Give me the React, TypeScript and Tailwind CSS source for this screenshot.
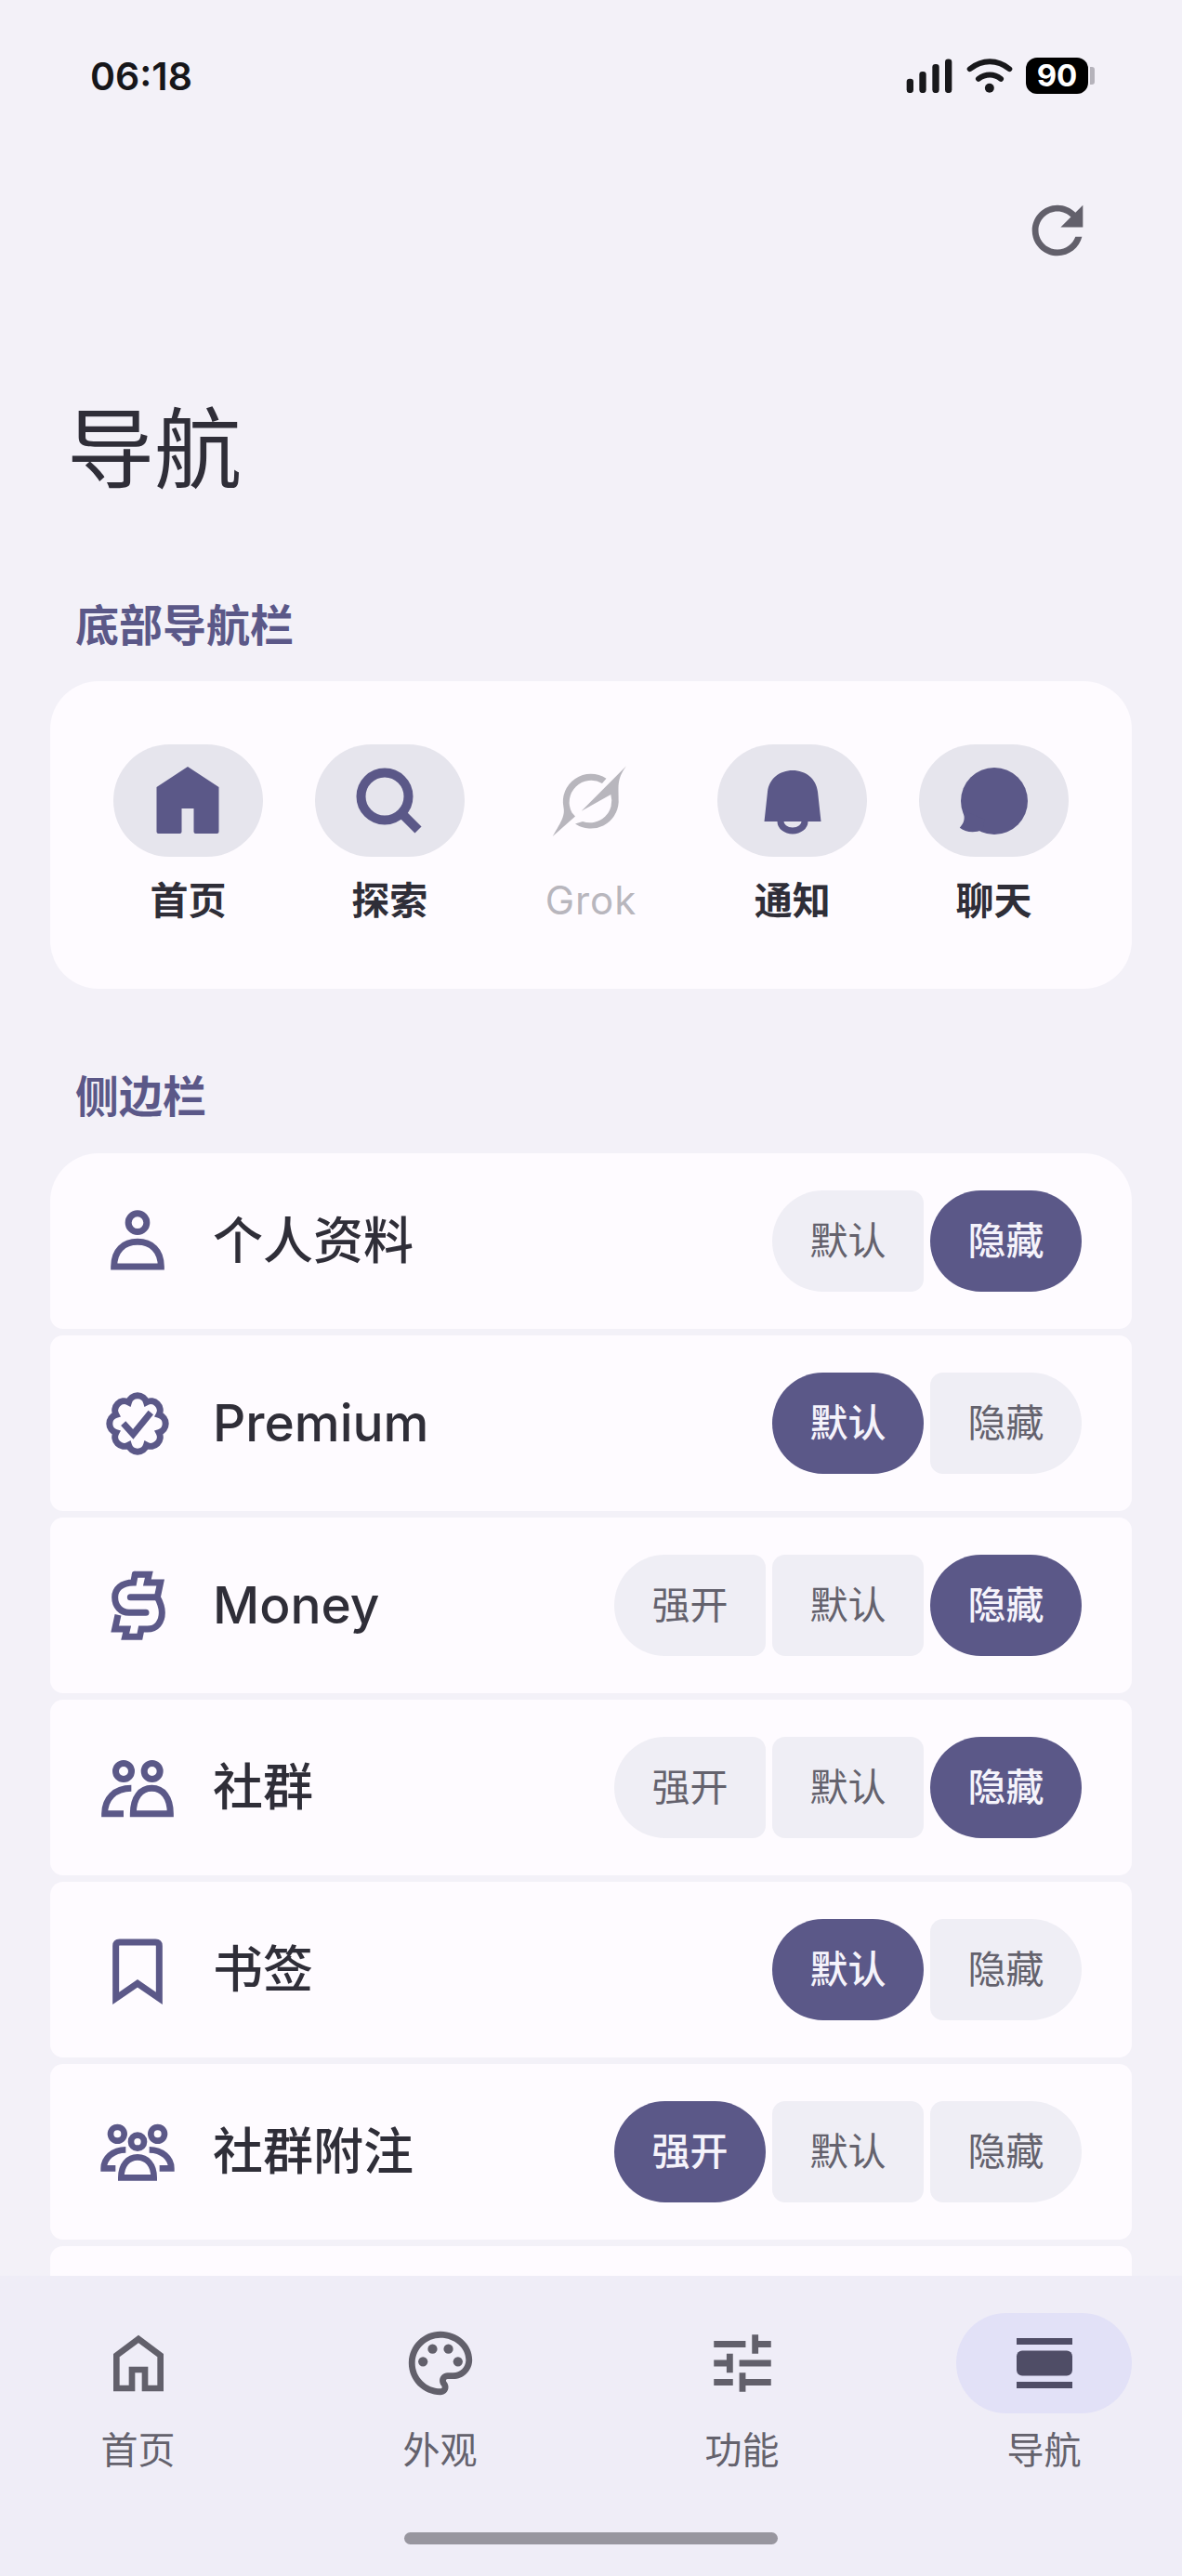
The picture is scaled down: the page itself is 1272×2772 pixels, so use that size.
import type { ReactNode } from "react";

type Choice = "强开" | "默认" | "隐藏";

type SidebarRow = {
  label: string;
  icon: ReactNode;
  options: Choice[];
  selected: Choice;
};

const PRIMARY = "#5b5888";

// eight lobes, valleys sit between the compass points
const badgePath = (() => {
  const pts = Array.from({ length: 8 }, (_, i) => {
    const a = ((22.5 + 45 * i) * Math.PI) / 180;
    return [40 + 25 * Math.sin(a), 40 - 25 * Math.cos(a)];
  });
  let d = `M${pts[7][0].toFixed(2)} ${pts[7][1].toFixed(2)}`;
  pts.forEach(([x, y]) => {
    d += ` A10 10 0 0 1 ${x.toFixed(2)} ${y.toFixed(2)}`;
  });
  return d + " Z";
})();

function OutlineIcon({ viewBox, width, children }: { viewBox: string; width: number; children: ReactNode }) {
  return (
    <svg viewBox={viewBox} className="h-[80px] w-[80px]" fill="none" stroke={PRIMARY} strokeWidth={width}>
      {children}
    </svg>
  );
}

const PersonIcon = (
  <OutlineIcon viewBox="55 46 240 240" width={21}>
    <circle cx="175" cy="105" r="29.5" />
    <path d="M99 247C99 195 130 167 175 167C220 167 251 195 251 247Z" />
  </OutlineIcon>
);

const BadgeIcon = (
  <OutlineIcon viewBox="0 0 80 80" width={7}>
    <path d={badgePath} />
    <path d="M24.7 39.7L35.3 51.3L54.3 28" />
  </OutlineIcon>
);

const MoneyIcon = (
  <OutlineIcon viewBox="53 23 240 240" width={21}>
    <path d="M165 42H210L204 68H247L237 115H150" strokeLinecap="round" />
    <path d="M165 42L160 68C120 68 100 90 100 115C100 145 120 165 145 165H200" strokeLinecap="round" />
    <path d="M237 115C245 130 252 145 252 165C252 195 235 218 205 218H185L180 243H133L139 218H100L110 172" />
  </OutlineIcon>
);

const GroupIcon = (
  <OutlineIcon viewBox="55 609 240 240" width={21}>
    <circle cx="130" cy="675" r="25.5" />
    <circle cx="222" cy="675" r="25.5" />
    <path d="M130 812H69C69 765 100 730 155 730" />
    <path d="M161 812C161 760 185 730 221 730C257 730 281 760 281 812Z" />
  </OutlineIcon>
);

const BookmarkIcon = (
  <OutlineIcon viewBox="55 57 240 240" width={21}>
    <path d="M105 268V99Q105 87 117 87H233Q245 87 245 99V268L175 220Z" />
  </OutlineIcon>
);

const CommunityIcon = (
  <OutlineIcon viewBox="55 645 240 240" width={20}>
    <circle cx="110" cy="706" r="22" />
    <circle cx="240" cy="706" r="22" />
    <circle cx="175" cy="731" r="21" />
    <path d="M122 847C122 805 145 781 175 781C205 781 228 805 228 847Z" />
    <path d="M137 757C95 757 66 785 66 817H104" />
    <path d="M213 757C255 757 284 785 284 817H246" />
  </OutlineIcon>
);

const rows: SidebarRow[] = [
  { label: "个人资料", icon: PersonIcon, options: ["默认", "隐藏"], selected: "隐藏" },
  { label: "Premium", icon: BadgeIcon, options: ["默认", "隐藏"], selected: "默认" },
  { label: "Money", icon: MoneyIcon, options: ["强开", "默认", "隐藏"], selected: "隐藏" },
  { label: "社群", icon: GroupIcon, options: ["强开", "默认", "隐藏"], selected: "隐藏" },
  { label: "书签", icon: BookmarkIcon, options: ["默认", "隐藏"], selected: "默认" },
  { label: "社群附注", icon: CommunityIcon, options: ["强开", "默认", "隐藏"], selected: "强开" },
];

function StatusBar() {
  return (
    <div className="flex h-[39px] items-center justify-between pl-[97px] pr-[94px]">
      <span className="mt-[2px] text-[41px] leading-none font-semibold text-[#16161a]">06:18</span>
      <div className="flex items-center">
        <svg viewBox="105 70 150 112" className="h-[37.5px] w-[50px]" fill="#18181b">
          <rect x="107" y="135" width="22" height="46" rx="10" />
          <rect x="148" y="112" width="22" height="69" rx="10" />
          <rect x="190" y="88" width="22" height="93" rx="10" />
          <rect x="231" y="71" width="22" height="110" rx="10" />
        </svg>
        <svg viewBox="290 60 170 130" className="ml-[12px] h-[43px] w-[57px]" fill="none" stroke="#18181b" strokeWidth="18" strokeLinecap="round">
          <path d="M309 103C350 71 398 71 438 103" />
          <path d="M337 135C360 118 388 118 410 135" />
          <circle cx="373" cy="165" r="15" fill="#18181b" stroke="none" />
        </svg>
        <div className="ml-[10px] flex h-[39px] w-[67px] items-center justify-center rounded-[12px] bg-black text-[33px] leading-none font-bold text-white">
          90
        </div>
        <div className="ml-[2px] h-[19px] w-[5px] rounded-r-[3px] bg-[#b5b3bb]" />
      </div>
    </div>
  );
}

function NavPreview({ label, dimmed, children }: { label: string; dimmed?: boolean; children: ReactNode }) {
  return (
    <div className="flex flex-col items-center">
      <div className={`flex h-[121px] w-[161px] items-center justify-center rounded-full ${dimmed ? "" : "bg-[#e6e5ed]"}`}>
        {children}
      </div>
      <span
        className={`mt-[20px] h-[54px] leading-[54px] ${
          dimmed ? "text-[42px] font-normal tracking-[1px] text-[#b8b6bd]" : "text-[41px] font-bold text-[#2f2e38]"
        }`}
      >
        {label}
      </span>
    </div>
  );
}

function BottomBarCard() {
  return (
    <section className="mx-[54px] mt-[30px] grid h-[331px] grid-cols-5 rounded-[52px] bg-[#fefbff] px-[40px] pt-[68px]">
      <NavPreview label="首页">
        <svg viewBox="0 0 80 80" className="h-[80px] w-[80px]" fill={PRIMARY}>
          <path d="M40 3L73.5 25V73Q73.5 75 71.5 75H48.5Q46.5 75 46.5 73V48H33.5V73Q33.5 75 31.5 75H8.5Q6.5 75 6.5 73V25Z" />
        </svg>
      </NavPreview>
      <NavPreview label="探索">
        <svg viewBox="0 0 80 80" className="h-[80px] w-[80px]" fill="none" stroke={PRIMARY} strokeWidth="10">
          <circle cx="35" cy="35" r="25.5" />
          <path d="M53 53L71 71" />
        </svg>
      </NavPreview>
      <NavPreview label="Grok" dimmed>
        <svg viewBox="0 0 90 90" className="h-[90px] w-[90px]" fill="#b8b6bd">
          <path d="M61.5 20.8A30 30 0 0 0 15.5 52C17 60 14 66 3.7 83L28 61.5L24.5 57.5A23.5 23.5 0 0 1 57 26Z" />
          <path d="M83 7.3L34.7 55.7L66.3 38A23.5 23.5 0 0 1 36 67L28 69.5A30 30 0 0 0 74.7 46C75 30 72 22 83 7.3Z" />
        </svg>
      </NavPreview>
      <NavPreview label="通知">
        <svg viewBox="0 0 80 80" className="h-[80px] w-[80px]" fill={PRIMARY}>
          <path d="M9.5 62L13 30C14.5 16 26 7 40 7C54 7 65.5 16 67 30L70.5 62Z" />
          <path d="M27 62A13 10 0 0 0 53 62" fill="none" stroke={PRIMARY} strokeWidth="7" />
        </svg>
      </NavPreview>
      <NavPreview label="聊天">
        <svg viewBox="0 0 80 80" className="h-[80px] w-[80px]" fill={PRIMARY}>
          <circle cx="40" cy="40" r="36" />
          <path d="M6 50C9 58 8 63 2.8 68.7C8 73 18 75 27 71L30 60Z" />
        </svg>
      </NavPreview>
    </section>
  );
}

function Segmented({ options, selected }: { options: Choice[]; selected: Choice }) {
  return (
    <div className="flex gap-[7px]">
      {options.map((option, i) => {
        const active = option === selected;
        let shape = "rounded-[14px]";
        if (active) shape = "rounded-[55px]";
        else if (i === 0) shape = "rounded-l-[55px] rounded-r-[14px]";
        else if (i === options.length - 1) shape = "rounded-r-[55px] rounded-l-[14px]";
        return (
          <div
            key={option}
            className={`flex h-[109px] w-[163px] items-center justify-center text-[41px] ${shape} ${
              active ? "bg-[#5b5888] font-medium text-[#f5f3fb]" : "bg-[#efeef5] text-[#64626d]"
            }`}
          >
            {option}
          </div>
        );
      })}
    </div>
  );
}

function Row({ row, first }: { row: SidebarRow; first: boolean }) {
  const latin = /^[A-Za-z]/.test(row.label);
  return (
    <div
      className={`flex h-[189px] shrink-0 items-center bg-[#fefbff] pl-[54px] pr-[54px] ${
        first ? "rounded-t-[52px] rounded-b-[14px]" : "rounded-[14px]"
      }`}
    >
      {row.icon}
      <span className={`ml-[41px] flex-1 font-medium text-[#2f2e38] ${latin ? "text-[55px]" : "text-[54px]"}`}>
        {row.label}
      </span>
      <Segmented options={row.options} selected={row.selected} />
    </div>
  );
}

function TabItem({ label, active, children }: { label: string; active?: boolean; children: ReactNode }) {
  return (
    <div className="flex w-[189px] flex-col items-center">
      <div className={`flex h-[108px] w-[189px] items-center justify-center rounded-full ${active ? "bg-[#e2e1f7]" : ""}`}>
        {children}
      </div>
      <span className="mt-[15px] h-[50px] text-[40px] leading-[50px] text-[#64626d]">{label}</span>
    </div>
  );
}

function TabBar() {
  return (
    <nav className="flex h-[323px] shrink-0 flex-col items-center bg-[#efedf7] pt-[40px]">
      <div className="flex w-full justify-between px-[54px]">
        <TabItem label="首页">
          <svg viewBox="26 67 240 240" className="h-[80px] w-[80px]" fill="none" stroke="#62606b" strokeWidth="20">
            <path d="M75 268V162L146 109L217 162V268H167V208H125V268Z" />
          </svg>
        </TabItem>
        <TabItem label="外观">
          <svg viewBox="0 0 24 24" className="h-[82px] w-[82px]" fill="#62606b">
            <path d="M12 22C6.49 22 2 17.51 2 12S6.49 2 12 2s10 4.04 10 9c0 3.31-2.69 6-6 6h-1.77c-.28 0-.5.22-.5.5 0 .12.05.23.13.33.41.47.64 1.06.64 1.67 0 1.38-1.12 2.5-2.5 2.5zm0-18c-4.41 0-8 3.59-8 8s3.59 8 8 8c.28 0 .5-.22.5-.5 0-.16-.08-.28-.14-.35-.41-.46-.63-1.05-.63-1.65 0-1.38 1.12-2.5 2.5-2.5H16c2.21 0 4-1.79 4-4 0-3.86-3.59-7-8-7z" />
            <circle cx="6.5" cy="11.5" r="1.5" />
            <circle cx="9.5" cy="7.5" r="1.5" />
            <circle cx="14.5" cy="7.5" r="1.5" />
            <circle cx="17.5" cy="11.5" r="1.5" />
          </svg>
        </TabItem>
        <TabItem label="功能">
          <svg viewBox="0 0 24 24" className="h-[82px] w-[82px]" fill="#62606b">
            <path d="M3 17v2h6v-2H3zM3 5v2h10V5H3zm10 16v-2h8v-2h-8v-2h-2v6h2zM7 9v2H3v2h4v2h2V9H7zm14 4v-2H11v2h10zm-6-4h2V7h4V5h-4V3h-2v6z" />
          </svg>
        </TabItem>
        <TabItem label="导航" active>
          <svg viewBox="0 0 80 80" className="h-[80px] w-[80px]" fill="#4f4d66">
            <rect x="10" y="13" width="60" height="7" />
            <rect x="10" y="26.5" width="60" height="27" rx="6" />
            <rect x="10" y="60" width="60" height="7" />
          </svg>
        </TabItem>
      </div>
      <div className="mt-[63px] h-[13px] w-[402px] rounded-full bg-[#98969f]" />
    </nav>
  );
}

export default function App() {
  return (
    <div className="flex h-[2772px] w-[1272px] flex-col overflow-hidden bg-[#f3f1f8] font-[Inter,'Noto_Sans_CJK_SC',sans-serif]">
      <main className="min-h-0 flex-1 overflow-hidden pt-[62px]">
        <StatusBar />
        <div className="mt-[106px] flex justify-end pr-[93px]">
          <svg viewBox="0 0 24 24" className="h-[82px] w-[82px]" fill="#62606b">
            <path d="M17.65 6.35C16.2 4.9 14.21 4 12 4c-4.42 0-7.99 3.58-7.99 8s3.57 8 7.99 8c3.73 0 6.84-2.55 7.73-6h-2.08c-.82 2.33-3.04 4-5.65 4-3.31 0-6-2.69-6-6s2.69-6 6-6c1.66 0 3.14.69 4.22 1.78L13 11h7V4l-2.35 2.35z" />
          </svg>
        </div>
        <h1 className="mt-[145px] h-[100px] pl-[72px] text-[94px] leading-[100px] font-normal text-[#2f2e38]">导航</h1>
        <h2 className="mt-[109px] h-[60px] pl-[81px] text-[47px] leading-[60px] font-bold text-[#5b5888]">底部导航栏</h2>
        <BottomBarCard />
        <h2 className="mt-[86px] h-[60px] pl-[81px] text-[47px] leading-[60px] font-bold text-[#5b5888]">侧边栏</h2>
        <section className="mx-[54px] mt-[31px] flex flex-col gap-[7px]">
          {rows.map((row, i) => (
            <Row key={row.label} row={row} first={i === 0} />
          ))}
          <div className="h-[189px] shrink-0 rounded-[14px] bg-[#fefbff]" />
        </section>
      </main>
      <TabBar />
    </div>
  );
}
